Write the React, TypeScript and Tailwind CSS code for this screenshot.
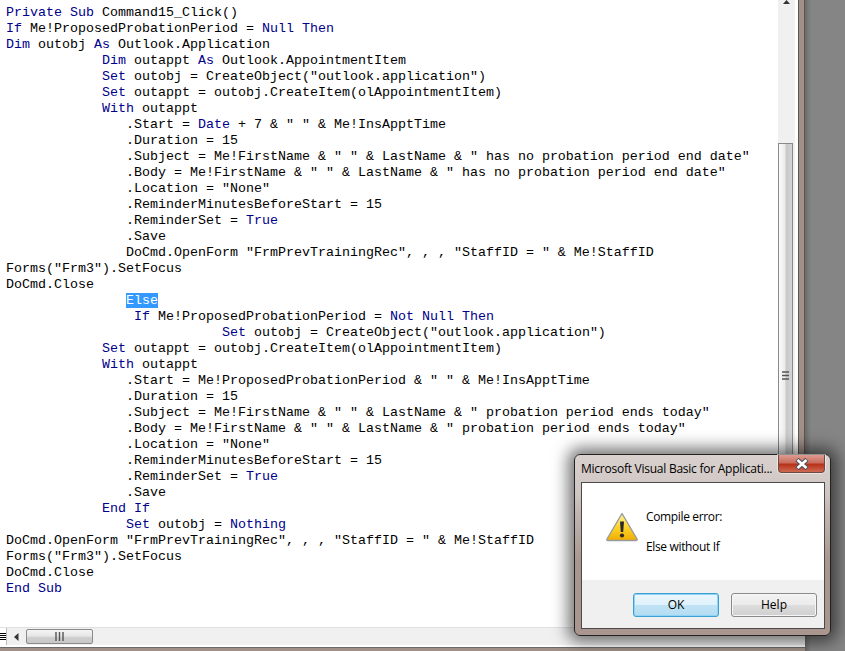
import React from "react";

const lines = [
  'Private Sub Command15_Click()',
  'If Me!ProposedProbationPeriod = Null Then',
  'Dim outobj As Outlook.Application',
  '            Dim outappt As Outlook.AppointmentItem',
  '            Set outobj = CreateObject("outlook.application")',
  '            Set outappt = outobj.CreateItem(olAppointmentItem)',
  '            With outappt',
  '               .Start = Date + 7 & " " & Me!InsApptTime',
  '               .Duration = 15',
  '               .Subject = Me!FirstName & " " & LastName & " has no probation period end date"',
  '               .Body = Me!FirstName & " " & LastName & " has no probation period end date"',
  '               .Location = "None"',
  '               .ReminderMinutesBeforeStart = 15',
  '               .ReminderSet = True',
  '               .Save',
  '               DoCmd.OpenForm "FrmPrevTrainingRec", , , "StaffID = " & Me!StaffID',
  'Forms("Frm3").SetFocus',
  'DoCmd.Close',
  '               @Else',
  '                If Me!ProposedProbationPeriod = Not Null Then',
  '                           Set outobj = CreateObject("outlook.application")',
  '            Set outappt = outobj.CreateItem(olAppointmentItem)',
  '            With outappt',
  '               .Start = Me!ProposedProbationPeriod & " " & Me!InsApptTime',
  '               .Duration = 15',
  '               .Subject = Me!FirstName & " " & LastName & " probation period ends today"',
  '               .Body = Me!FirstName & " " & LastName & " probation period ends today"',
  '               .Location = "None"',
  '               .ReminderMinutesBeforeStart = 15',
  '               .ReminderSet = True',
  '               .Save',
  '            End If',
  '               Set outobj = Nothing',
  'DoCmd.OpenForm "FrmPrevTrainingRec", , , "StaffID = " & Me!StaffID',
  'Forms("Frm3").SetFocus',
  'DoCmd.Close',
  'End Sub',
];

const KW = /\b(Private|Sub|If|Null|Then|Dim|As|Set|With|End|Not|Nothing|True|Date)\b/;

function CodeLine({ text }: { text: string }) {
  if (text.includes("@Else")) {
    const [pad] = text.split("@");
    return (
      <div className="h-4 whitespace-pre">
        {pad}
        <span className="bg-[#3399ff] text-white">Else</span>
      </div>
    );
  }
  const parts = text.split(KW);
  return (
    <div className="h-4 whitespace-pre">
      {parts.map((p, i) =>
        i % 2 === 1 ? (
          <span key={i} className="text-[#00008b]">
            {p}
          </span>
        ) : (
          <span key={i}>{p}</span>
        )
      )}
    </div>
  );
}

function Grip({ vertical }: { vertical?: boolean }) {
  return vertical ? (
    <svg width="7" height="9" viewBox="0 0 7 9">
      <path d="M0 1H7M0 4.5H7M0 8H7" stroke="#555" strokeWidth="1.4" />
    </svg>
  ) : (
    <svg width="9" height="9" viewBox="0 0 9 9">
      <path d="M1 0V9M4.5 0V9M8 0V9" stroke="#555" strokeWidth="1.4" />
    </svg>
  );
}

function WarningIcon() {
  return (
    <svg width="32" height="30" viewBox="0 0 32 30">
      <defs>
        <linearGradient id="warnFill" x1="0" y1="0" x2="0" y2="1">
          <stop offset="0" stopColor="#fff3a0" />
          <stop offset="0.5" stopColor="#ffd52a" />
          <stop offset="1" stopColor="#f0ac00" />
        </linearGradient>
      </defs>
      <path d="M16 1.5 L31 27 Q31.5 28.5 30 28.5 H2 Q0.5 28.5 1 27 Z" fill="url(#warnFill)" stroke="#9a9a9a" strokeWidth="1.4" strokeLinejoin="round" />
      <path d="M14 9.5 H18 L17.2 20 H14.8 Z" fill="#2a2a2a" />
      <ellipse cx="16" cy="23.6" rx="2.1" ry="2" fill="#2a2a2a" />
    </svg>
  );
}

function Dialog() {
  return (
    <div
      className="absolute left-[574px] top-[454px] flex h-[182px] w-[257px] flex-col rounded-[6px] border border-[#222] bg-[linear-gradient(180deg,#d9d1ce_0%,#cfc6c2_22%,#c4b8b3_30%,#a8968f_60%,#a8968f_100%)] shadow-[0_0_16px_6px_rgba(0,0,0,0.55)]"
      style={{ fontFamily: "'Open Sans', sans-serif" }}
    >
      <div className="flex h-[27px] items-start pl-[6px] pr-[5px]">
        <div className="flex-1 whitespace-pre pt-[5px] text-[12px] leading-[18px] tracking-[-0.25px] text-black">
          Microsoft Visual Basic for Applicati...
        </div>
        <div className="flex h-[18px] w-[47px] items-center justify-center rounded-b-[4px] border border-t-0 border-[#6b4a44] bg-[linear-gradient(180deg,#dd9b8f_0%,#c96f5f_45%,#b8321a_55%,#cf6a52_100%)] shadow-[0_0_0_1px_rgba(255,255,255,0.5)]">
          <svg width="16" height="12" viewBox="0 0 16 12">
            <path d="M3 1.5 L13 10.5 M13 1.5 L3 10.5" stroke="#46505e" strokeWidth="4.6" />
            <path d="M3.5 2 L12.5 10 M12.5 2 L3.5 10" stroke="#ffffff" strokeWidth="2.6" />
          </svg>
        </div>
      </div>
      <div className="mb-[6px] ml-[6px] mr-[5px] flex flex-1 flex-col border border-[#4a4a4a] bg-white">
        <div className="flex h-[97px] text-[12px] leading-[16px] tracking-[-0.35px] text-black">
          <div className="ml-[24px] mt-[29px]">
            <WarningIcon />
          </div>
          <div className="ml-[8px] pt-[26px]">
            <div>Compile error:</div>
            <div className="mt-[14px]">Else without If</div>
          </div>
        </div>
        <div className="flex flex-1 items-start gap-3 bg-[#f0f0f0] pl-[51px] pt-[13px] text-[12px] text-black">
          <button className="flex h-[24px] w-[86px] items-center justify-center rounded-[3px] border border-[#3c9fd6] bg-[linear-gradient(180deg,#ecf7fd_0%,#dff1fb_48%,#bfe3f5_52%,#b4dcf1_100%)] shadow-[inset_0_0_0_1px_#8fd4f5]">
            OK
          </button>
          <button className="flex h-[24px] w-[86px] items-center justify-center rounded-[3px] border border-[#8a8a8a] bg-[linear-gradient(180deg,#f2f2f2_0%,#ebebeb_48%,#dddddd_52%,#cfcfcf_100%)] shadow-[inset_0_0_0_1px_#f5f5f5]">
            Help
          </button>
        </div>
      </div>
    </div>
  );
}

export default function App() {
  return (
    <div className="relative flex h-[651px] w-[845px] overflow-hidden bg-[#858585]">
      <div className="flex h-full w-[805px] shrink-0 flex-col bg-white">
        <div className="flex min-h-0 flex-1">
          <div className="min-w-0 flex-1 overflow-hidden bg-white pl-[6px] pt-[5px] text-[13.33px] leading-4 text-black" style={{ fontFamily: "'Liberation Mono', monospace" }}>
            {lines.map((l, i) => (
              <CodeLine key={i} text={l} />
            ))}
          </div>
          <div className="flex w-[17px] shrink-0 flex-col items-center bg-[#f0f0f0]">
            <div className="relative h-[143px] w-full">
              <svg className="absolute left-[4px] top-0" width="9" height="4" viewBox="0 0 9 4">
                <path d="M1 4 L4.5 0 L8 4 Z" fill="#333" />
              </svg>
            </div>
            <div className="ml-[-2px] flex h-[464px] w-[15px] items-center justify-center border border-[#8a8a8a] bg-[linear-gradient(90deg,#fafafa_0%,#ececec_45%,#c8c8c8_55%,#d4d4d4_100%)]">
              <Grip vertical />
            </div>
          </div>
          <div className="w-[3px] shrink-0 bg-white" />
          <div className="w-[7px] shrink-0 border-x border-[#5e5450] bg-[#a09088]" />
        </div>
        <div className="flex h-[18px] shrink-0 border-t border-[#e0e0e0] bg-[#f0f0f0]">
          <div className="flex w-[7px] flex-col justify-center border-r border-[#bdbdbd] bg-white">
            <div className="flex flex-col gap-[1px]">
              <div className="h-px w-[6px] bg-black" />
              <div className="h-px w-[6px] bg-black" />
              <div className="h-px w-[6px] bg-black" />
              <div className="h-px w-[6px] bg-black" />
            </div>
          </div>
          <div className="flex w-[19px] items-center justify-center">
            <svg width="5" height="8" viewBox="0 0 5 8">
              <path d="M4.5 0 L0 4 L4.5 8 Z" fill="#333" />
            </svg>
          </div>
          <div className="flex h-[15px] w-[67px] items-center justify-center self-center rounded-[2px] border border-[#8a8a8a] bg-[linear-gradient(180deg,#f4f4f4_0%,#e6e6e6_48%,#cfcfcf_55%,#c8c8c8_100%)]">
            <Grip />
          </div>
        </div>
        <div className="h-[3px] shrink-0 border-b border-[#6a6a6a] bg-white" />
        <div className="h-[3px] shrink-0 bg-[#a09088]" />
      </div>
      <div className="flex-1 bg-[linear-gradient(90deg,#6a6a6a_0px,#858585_6px,#858585_100%)]" />
      <Dialog />
    </div>
  );
}
